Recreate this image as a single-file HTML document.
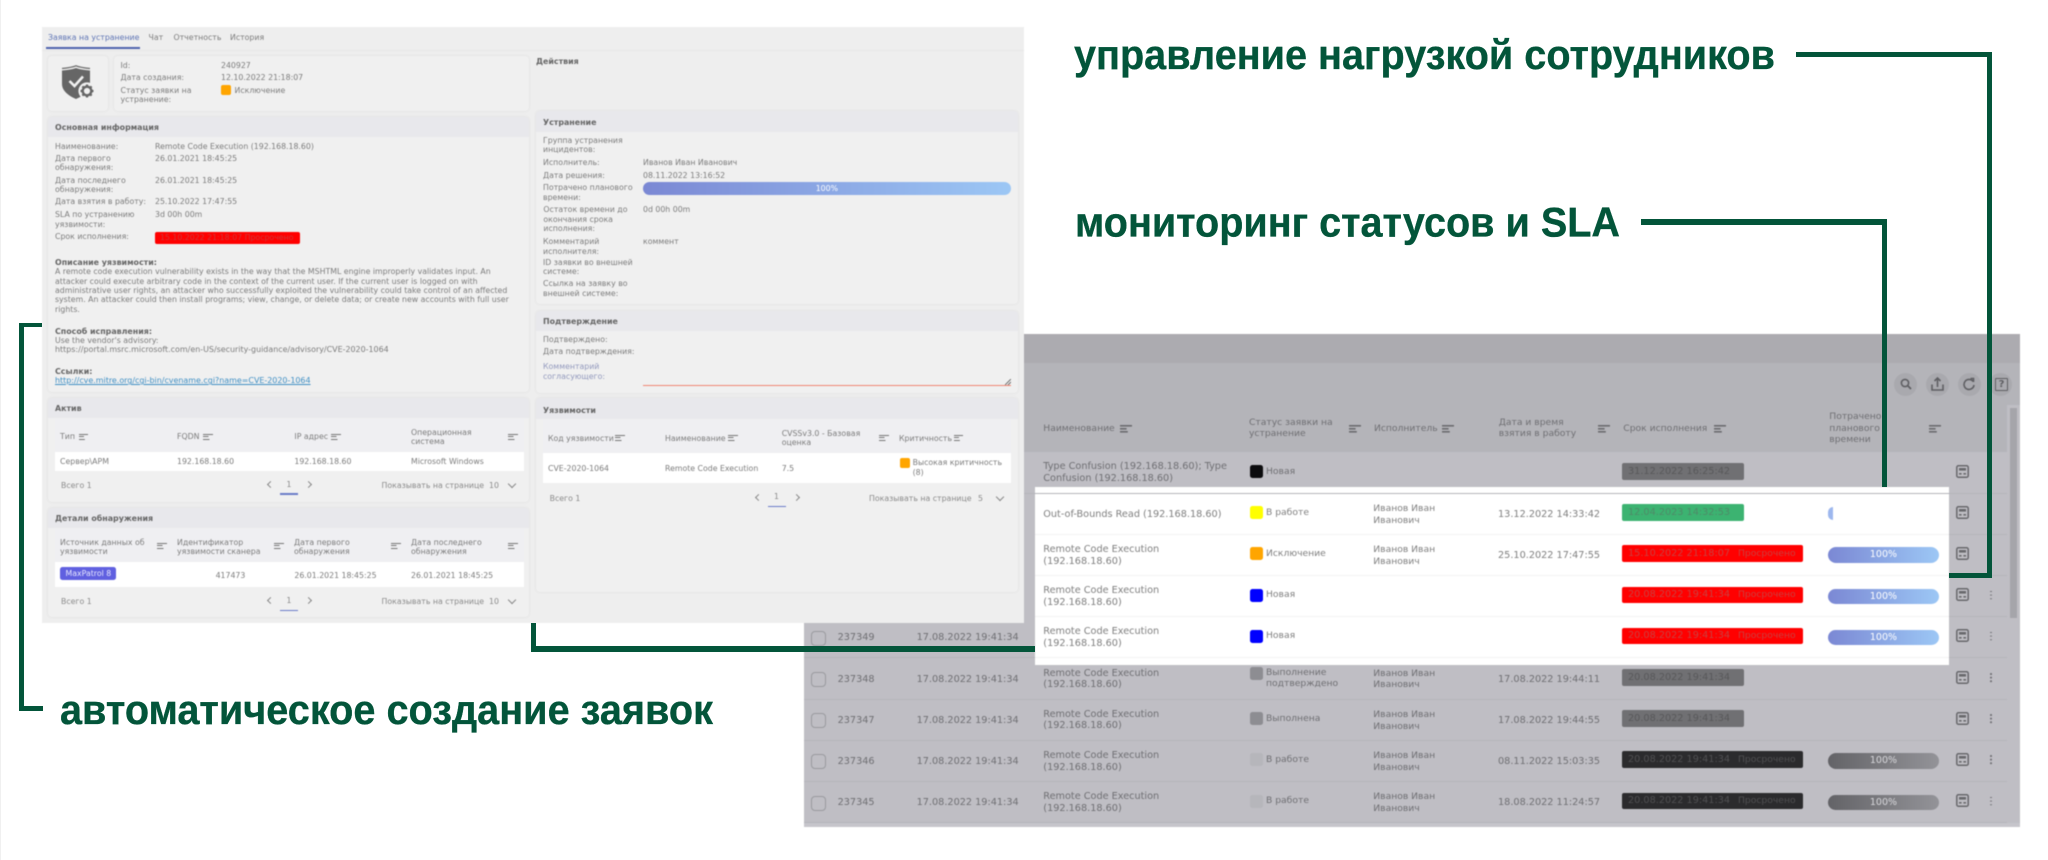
<!DOCTYPE html>
<html lang="ru">
<head>
<meta charset="utf-8">
<title>Заявка на устранение</title>
<style>
html,body{margin:0;padding:0;background:#fff;width:2048px;height:860px;overflow:hidden}
body{position:relative;font-family:"DejaVu Sans","Liberation Sans",sans-serif}
.layer{position:absolute;left:0;top:0;width:2048px;height:860px}
.layer div,.layer span,.layer a,.layer svg{position:absolute}
/* panel */
#panel{filter:blur(.55px);color:#7c7c7c;font-size:7.8px}
.t{white-space:nowrap;line-height:10px;height:10px;margin-top:.8px}
.l{font-size:7.95px}
.h{font-weight:bold;color:#666;font-size:7.9px}
.card{background:#f0f0f0;border-radius:4px;box-shadow:0 0 3px rgba(0,0,0,.07)}
.chd{background:#e8e8ec;border-radius:4px 4px 0 0}
.si{width:9.5px;height:7px;background:linear-gradient(#777,#777) 0 0/100% 1.4px no-repeat,linear-gradient(#777,#777) 0 50%/55% 1.4px no-repeat,linear-gradient(#777,#777) 0 100%/65% 1.4px no-repeat}
.pg{color:#8a8a8a}
.ch{width:5px;height:5px;border-right:1px solid #888;border-bottom:1px solid #888;transform:rotate(45deg)}
.cl{width:4px;height:4px;border-left:1px solid #888;border-bottom:1px solid #888;transform:rotate(45deg)}
.cr{width:4px;height:4px;border-right:1px solid #888;border-top:1px solid #888;transform:rotate(45deg)}
/* table */
#tbl{filter:blur(.45px);color:#6f6f73;font-size:9.7px}
.r{left:0;width:2048px;height:41px}
.t2{white-space:nowrap;line-height:12px;height:12px}
.c{font-size:9.2px}
.r .t2{margin-top:.8px}
.r .box .t2{margin-top:-.3px}
.sq{width:13px;height:13px;border-radius:2.5px;top:13px;left:1249.5px}
.box{left:1622px;top:11px;height:16.5px;border-radius:2px}
.bar{left:1827.7px;top:13px;width:111.6px;height:15.3px;border-radius:8px;background:linear-gradient(90deg,#7b88d4,#9cc7f5);color:#fff;text-align:center;font-size:9.5px;line-height:16px}
.bar2{background:linear-gradient(90deg,#636367,#939398);color:#d8d8dc}
.sep{left:804px;width:1203px;top:40.6px;height:1px;background:#b5b5ba}
.si2{width:11.7px;height:8px;background:linear-gradient(#6a6a6e,#6a6a6e) 0 0/100% 1.6px no-repeat,linear-gradient(#6a6a6e,#6a6a6e) 0 50%/55% 1.6px no-repeat,linear-gradient(#6a6a6e,#6a6a6e) 0 100%/65% 1.6px no-repeat}
.cb{left:810.5px;top:14px;width:13px;height:13px;border:1.5px solid #9a9a9f;border-radius:4px}
.ca{left:1955.7px;top:12.5px;width:13px;height:13px}
.do{left:1990px;top:15px;width:1.6px;height:1.6px;background:#707074;box-shadow:0 3.6px 0 #707074,0 7.2px 0 #707074;border-radius:50%}
.cir{top:372.5px;width:23px;height:23px;border-radius:50%;background:#a9a9ae}
.w{color:#7f7f7f}
.g{background:#03553a;position:absolute;z-index:5}
</style>
</head>
<body>
<svg width="0" height="0" style="position:absolute">
<symbol id="calc" viewBox="0 0 13 13"><rect x=".8" y=".8" width="11.4" height="11.4" rx="1.5" fill="none" stroke="#68686c" stroke-width="1.5"/><rect x="3" y="3" width="7" height="2.6" fill="#68686c"/><rect x="3" y="8" width="2.6" height="1.6" fill="#68686c"/><rect x="7.4" y="8" width="2.6" height="1.6" fill="#68686c"/></symbol>
</svg>
<div style="position:absolute;left:0;top:0;width:1px;height:860px;background:#f0f0f0"></div>

<!-- TABLE -->
<div class="layer" id="tbl">
<div style="left:804px;top:334px;width:1216px;height:492.7px;background:#bfbec4"></div>
<div style="left:804px;top:334px;width:1216px;height:29.3px;background:#acabb0"></div>
<div style="left:804px;top:363.3px;width:1216px;height:88.7px;background:#b4b4b9"></div>
<div style="left:2007px;top:405px;width:13px;height:421.7px;background:#bfbec4"></div>
<div style="left:2010.3px;top:407.7px;width:7px;height:210.6px;background:#a5a5aa"></div>
<div style="left:804px;top:822.7px;width:1216px;height:4px;background:#c6c5cb"></div>

<div class="cir" style="left:1894.2px"></div>
<div class="cir" style="left:1925.8px"></div>
<div class="cir" style="left:1957.5px"></div>
<div class="cir" style="left:1989.2px"></div>
<svg style="left:1899px;top:377px" width="14" height="14" viewBox="0 0 14 14"><circle cx="6" cy="6" r="3.6" fill="none" stroke="#5f5f63" stroke-width="1.6"/><path d="M8.8 8.8L12 12" stroke="#5f5f63" stroke-width="1.8"/></svg>
<svg style="left:1930px;top:376px" width="15" height="16" viewBox="0 0 15 16"><path d="M7.5 11V2M4.5 5L7.5 2L10.5 5M2 8.5V14H13V8.5" fill="none" stroke="#5f5f63" stroke-width="1.6"/></svg>
<svg style="left:1962px;top:377px" width="14" height="14" viewBox="0 0 14 14"><path d="M11 4.4A5 5 0 1 0 12 8M8.5 1.5L11.5 1.5L11.5 5" fill="none" stroke="#5f5f63" stroke-width="1.6"/></svg>
<div style="left:1995px;top:378px;width:11px;height:11px;border:1.6px solid #5f5f63;border-radius:1px;color:#5f5f63;font-size:10px;line-height:11px;text-align:center;font-weight:bold">?</div>

<span class="t2 c" style="left:1043.3px;top:422.5px">Наименование</span><span class="si2" style="left:1120px;top:424.5px"></span>
<span class="t2 c" style="left:1249px;top:416.7px">Статус заявки на</span><span class="t2 c" style="left:1249px;top:428px">устранение</span><span class="si2" style="left:1349px;top:424.5px"></span>
<span class="t2 c" style="left:1374px;top:422.5px">Исполнитель</span><span class="si2" style="left:1442px;top:424.5px"></span>
<span class="t2 c" style="left:1498.7px;top:416.7px">Дата и время</span><span class="t2 c" style="left:1498.7px;top:428px">взятия в работу</span><span class="si2" style="left:1598.3px;top:424.5px"></span>
<span class="t2 c" style="left:1623.3px;top:422.5px">Срок исполнения</span><span class="si2" style="left:1714px;top:424.5px"></span>
<span class="t2 c" style="left:1829.3px;top:411px">Потрачено</span><span class="t2 c" style="left:1829.3px;top:422.5px">планового</span><span class="t2 c" style="left:1829.3px;top:433.7px">времени</span><span class="si2" style="left:1929px;top:424.5px"></span>

<!-- white highlight -->
<div style="left:1035px;top:486.7px;width:914px;height:178.6px;background:#fff"></div>

<!-- r0 -->
<div class="r" style="top:452px">
<span class="sep"></span>
<span class="t2" style="left:1043.3px;top:8.7px">Type Confusion (192.168.18.60); Type</span><span class="t2" style="left:1043.3px;top:20.3px">Confusion (192.168.18.60)</span>
<span class="sq" style="background:#0c0c0e"></span><span class="t2 c" style="left:1266px;top:13px">Новая</span>
<span class="box" style="width:122px;background:#707073;color:#58585a"><span class="t2" style="left:6px;top:3px">31.12.2022 16:25:42</span></span>
<svg class="ca"><use href="#calc"/></svg>
</div>
<!-- r1 -->
<div class="r w" style="top:493.3px">
<span class="sep" style="background:#f3f3f3;width:914px;left:1035px"></span><span class="sep" style="background:#b5b5ba;left:1949px;width:58px"></span>
<span class="t2" style="left:1043.3px;top:14.7px">Out-of-Bounds Read (192.168.18.60)</span>
<span class="sq" style="background:#ffff00"></span><span class="t2 c" style="left:1266px;top:13px">В работе</span>
<span class="t2 c" style="left:1373.3px;top:9px">Иванов Иван</span><span class="t2 c" style="left:1373.3px;top:20.7px">Иванович</span>
<span class="t2" style="left:1498px;top:14.7px">13.12.2022 14:33:42</span>
<span class="box" style="width:122px;background:#3cb371;color:#4f8a68"><span class="t2" style="left:6px;top:3px">12.04.2023 14:32:53</span></span>
<span style="left:1827.7px;top:13.4px;width:5.5px;height:13.4px;background:#9db7ee;border-radius:5px 0 0 5px"></span>
<svg class="ca"><use href="#calc"/></svg>
</div>
<!-- r2 -->
<div class="r w" style="top:534.4px">
<span class="sep" style="background:#f3f3f3;width:914px;left:1035px"></span><span class="sep" style="background:#b5b5ba;left:1949px;width:58px"></span>
<span class="t2" style="left:1043.3px;top:9px">Remote Code Execution</span><span class="t2" style="left:1043.3px;top:20.5px">(192.168.18.60)</span>
<span class="sq" style="background:#ffa500"></span><span class="t2 c" style="left:1266px;top:13px">Исключение</span>
<span class="t2 c" style="left:1373.3px;top:9px">Иванов Иван</span><span class="t2 c" style="left:1373.3px;top:20.7px">Иванович</span>
<span class="t2" style="left:1498px;top:14.7px">25.10.2022 17:47:55</span>
<span class="box" style="width:181.3px;background:#ff0000;color:#c94040"><span class="t2" style="left:6px;top:3px">15.10.2022 21:18:07</span><span class="t2 c" style="left:116px;top:3px">Просрочено</span></span>
<span class="bar">100%</span>
<svg class="ca"><use href="#calc"/></svg>
</div>
<!-- r3 -->
<div class="r w" style="top:575.6px">
<span class="sep" style="background:#f3f3f3;width:914px;left:1035px"></span><span class="sep" style="background:#b5b5ba;left:1949px;width:58px"></span>
<span class="t2" style="left:1043.3px;top:9px">Remote Code Execution</span><span class="t2" style="left:1043.3px;top:20.5px">(192.168.18.60)</span>
<span class="sq" style="background:#0000ff"></span><span class="t2 c" style="left:1266px;top:13px">Новая</span>
<span class="box" style="width:181.3px;background:#ff0000;color:#c94040"><span class="t2" style="left:6px;top:3px">20.08.2022 19:41:34</span><span class="t2 c" style="left:116px;top:3px">Просрочено</span></span>
<span class="bar">100%</span>
<svg class="ca"><use href="#calc"/></svg><span class="do"></span>
</div>
<!-- r4 -->
<div class="r w" style="top:616.7px">
<span class="sep" style="background:#f3f3f3;width:914px;left:1035px"></span><span class="sep" style="background:#b5b5ba;left:804px;width:231px"></span><span class="sep" style="background:#b5b5ba;left:1949px;width:58px"></span>
<span class="cb"></span>
<span class="t2" style="left:837.6px;top:15px;color:#6f6f73">237349</span><span class="t2" style="left:916.6px;top:15px;color:#6f6f73">17.08.2022 19:41:34</span>
<span class="t2" style="left:1043.3px;top:9px">Remote Code Execution</span><span class="t2" style="left:1043.3px;top:20.5px">(192.168.18.60)</span>
<span class="sq" style="background:#0000ff"></span><span class="t2 c" style="left:1266px;top:13px">Новая</span>
<span class="box" style="width:181.3px;background:#ff0000;color:#c94040"><span class="t2" style="left:6px;top:3px">20.08.2022 19:41:34</span><span class="t2 c" style="left:116px;top:3px">Просрочено</span></span>
<span class="bar">100%</span>
<svg class="ca"><use href="#calc"/></svg><span class="do"></span>
</div>
<!-- r5 -->
<div class="r" style="top:658px">
<span class="sep"></span>
<span class="cb"></span>
<span class="t2" style="left:837.6px;top:15px">237348</span><span class="t2" style="left:916.6px;top:15px">17.08.2022 19:41:34</span>
<span class="t2" style="left:1043.3px;top:9px">Remote Code Execution</span><span class="t2" style="left:1043.3px;top:20.5px">(192.168.18.60)</span>
<span class="sq" style="background:#8d8d92;top:8.5px"></span><span class="t2 c" style="left:1266px;top:8px">Выполнение</span><span class="t2 c" style="left:1266px;top:19.5px">подтверждено</span>
<span class="t2 c" style="left:1373.3px;top:9px">Иванов Иван</span><span class="t2 c" style="left:1373.3px;top:20.7px">Иванович</span>
<span class="t2" style="left:1498px;top:15px">17.08.2022 19:44:11</span>
<span class="box" style="width:122px;background:#707073;color:#58585a"><span class="t2" style="left:6px;top:3px">20.08.2022 19:41:34</span></span>
<svg class="ca"><use href="#calc"/></svg><span class="do"></span>
</div>
<!-- r6 -->
<div class="r" style="top:699.2px">
<span class="sep"></span>
<span class="cb"></span>
<span class="t2" style="left:837.6px;top:15px">237347</span><span class="t2" style="left:916.6px;top:15px">17.08.2022 19:41:34</span>
<span class="t2" style="left:1043.3px;top:9px">Remote Code Execution</span><span class="t2" style="left:1043.3px;top:20.5px">(192.168.18.60)</span>
<span class="sq" style="background:#8d8d92"></span><span class="t2 c" style="left:1266px;top:13px">Выполнена</span>
<span class="t2 c" style="left:1373.3px;top:9px">Иванов Иван</span><span class="t2 c" style="left:1373.3px;top:20.7px">Иванович</span>
<span class="t2" style="left:1498px;top:15px">17.08.2022 19:44:55</span>
<span class="box" style="width:122px;background:#707073;color:#58585a"><span class="t2" style="left:6px;top:3px">20.08.2022 19:41:34</span></span>
<svg class="ca"><use href="#calc"/></svg><span class="do"></span>
</div>
<!-- r7 -->
<div class="r" style="top:740.3px">
<span class="sep"></span>
<span class="cb"></span>
<span class="t2" style="left:837.6px;top:15px">237346</span><span class="t2" style="left:916.6px;top:15px">17.08.2022 19:41:34</span>
<span class="t2" style="left:1043.3px;top:9px">Remote Code Execution</span><span class="t2" style="left:1043.3px;top:20.5px">(192.168.18.60)</span>
<span class="sq" style="background:#b6b6bb"></span><span class="t2 c" style="left:1266px;top:13px">В работе</span>
<span class="t2 c" style="left:1373.3px;top:9px">Иванов Иван</span><span class="t2 c" style="left:1373.3px;top:20.7px">Иванович</span>
<span class="t2" style="left:1498px;top:15px">08.11.2022 15:03:35</span>
<span class="box" style="width:181.3px;background:#2b2b2d;color:#505052"><span class="t2" style="left:6px;top:3px">20.08.2022 19:41:34</span><span class="t2 c" style="left:116px;top:3px">Просрочено</span></span>
<span class="bar bar2">100%</span>
<svg class="ca"><use href="#calc"/></svg><span class="do"></span>
</div>
<!-- r8 -->
<div class="r" style="top:781.5px">
<span class="sep"></span>
<span class="cb"></span>
<span class="t2" style="left:837.6px;top:15px">237345</span><span class="t2" style="left:916.6px;top:15px">17.08.2022 19:41:34</span>
<span class="t2" style="left:1043.3px;top:9px">Remote Code Execution</span><span class="t2" style="left:1043.3px;top:20.5px">(192.168.18.60)</span>
<span class="sq" style="background:#b6b6bb"></span><span class="t2 c" style="left:1266px;top:13px">В работе</span>
<span class="t2 c" style="left:1373.3px;top:9px">Иванов Иван</span><span class="t2 c" style="left:1373.3px;top:20.7px">Иванович</span>
<span class="t2" style="left:1498px;top:15px">18.08.2022 11:24:57</span>
<span class="box" style="width:181.3px;background:#2b2b2d;color:#505052"><span class="t2" style="left:6px;top:3px">20.08.2022 19:41:34</span><span class="t2 c" style="left:116px;top:3px">Просрочено</span></span>
<span class="bar bar2">100%</span>
<svg class="ca"><use href="#calc"/></svg><span class="do"></span>
</div>
</div>

<!-- PANEL -->
<div class="layer" id="panel">
<div style="left:42px;top:27px;width:982px;height:595.5px;background:#eeeeee"></div>
<div style="left:42px;top:50px;width:982px;height:1px;background:#e8e8e8"></div>
<span class="t" style="left:48px;top:32.7px;color:#5f75b5">Заявка на устранение</span>
<span class="t" style="left:148.5px;top:32.7px">Чат</span>
<span class="t" style="left:173.5px;top:32.7px">Отчетность</span>
<span class="t" style="left:230px;top:32.7px">История</span>
<div style="left:46px;top:47px;width:94px;height:2.4px;background:#4f62ae"></div>

<div class="card" style="left:48px;top:56px;width:60px;height:55px"></div>
<svg style="left:60px;top:65px" width="36" height="36" viewBox="0 0 36 36">
<path d="M2 3.5C7 3 12 2.5 16 .8C20 2.5 25 3 30 3.5" fill="none" stroke="#6a6a6a" stroke-width="1.2"/>
<path d="M2 5.5C7 5 12 4.5 16 3C20 4.5 25 5 30 5.5V19C30 26 23 31 16 34C9 31 2 26 2 19Z" fill="#666"/>
<path d="M9.5 16L14.5 21L23 11.5" fill="none" stroke="#f0f0f0" stroke-width="2.6"/>
<circle cx="27" cy="26" r="8.6" fill="#f0f0f0"/>
<circle cx="27" cy="26" r="4.3" fill="none" stroke="#666" stroke-width="2.4"/>
<path d="M27 19.5V22M27 30V32.5M20.5 26H23M31 26H33.5M22.4 21.4L24 23M30 29L31.6 30.6M22.4 30.6L24 29M30 23L31.6 21.4" stroke="#666" stroke-width="2.2"/>
</svg>
<div class="card" style="left:114px;top:56px;width:415px;height:55px"></div>
<span class="t" style="left:120.5px;top:60px">Id:</span><span class="t" style="left:221px;top:60px">240927</span>
<span class="t" style="left:120.5px;top:72.7px">Дата создания:</span><span class="t" style="left:221px;top:72.7px">12.10.2022 21:18:07</span>
<span class="t" style="left:120.5px;top:85.3px">Статус заявки на</span><span class="t" style="left:120.5px;top:94.7px">устранение:</span>
<div style="left:221px;top:85.3px;width:10px;height:10px;border-radius:2px;background:#ffa500"></div>
<span class="t" style="left:234.5px;top:85.3px">Исключение</span>

<!-- Основная информация -->
<div class="card" style="left:48px;top:116.7px;width:481px;height:275px"></div>
<div class="chd" style="left:48px;top:116.7px;width:481px;height:20px"></div>
<span class="t h" style="left:55px;top:122.3px">Основная информация</span>
<span class="t" style="left:55px;top:141px">Наименование:</span><span class="t" style="left:155px;top:141px">Remote Code Execution (192.168.18.60)</span>
<span class="t" style="left:55px;top:153.3px">Дата первого</span><span class="t" style="left:55px;top:162.7px">обнаружения:</span><span class="t" style="left:155px;top:153.3px">26.01.2021 18:45:25</span>
<span class="t" style="left:55px;top:175px">Дата последнего</span><span class="t" style="left:55px;top:184.3px">обнаружения:</span><span class="t" style="left:155px;top:175px">26.01.2021 18:45:25</span>
<span class="t" style="left:55px;top:196.7px">Дата взятия в работу:</span><span class="t" style="left:155px;top:196.7px">25.10.2022 17:47:55</span>
<span class="t" style="left:55px;top:209.7px">SLA по устранению</span><span class="t" style="left:55px;top:219px">уязвимости:</span><span class="t" style="left:155px;top:209.7px">3d 00h 00m</span>
<span class="t" style="left:55px;top:231.7px">Срок исполнения:</span>
<div style="left:155px;top:231.7px;width:145px;height:12.6px;background:#ff0000;border-radius:2px"></div>
<span class="t" style="left:160px;top:232.5px;color:#c93a3a">15.10.2022 21:18:07 Просрочено</span>
<span class="t h" style="left:55px;top:257.3px">Описание уязвимости:</span>
<span class="t" style="left:55px;top:266.7px">A remote code execution vulnerability exists in the way that the MSHTML engine improperly validates input. An</span>
<span class="t" style="left:55px;top:276px">attacker could execute arbitrary code in the context of the current user. If the current user is logged on with</span>
<span class="t" style="left:55px;top:285.3px">administrative user rights, an attacker who successfully exploited the vulnerability could take control of an affected</span>
<span class="t" style="left:55px;top:294.7px">system. An attacker could then install programs; view, change, or delete data; or create new accounts with full user</span>
<span class="t" style="left:55px;top:304px">rights.</span>
<span class="t h" style="left:55px;top:326px">Способ исправления:</span>
<span class="t" style="left:55px;top:335px">Use the vendor's advisory:</span>
<span class="t l" style="left:55px;top:344.3px">https://portal.msrc.microsoft.com/en-US/security-guidance/advisory/CVE-2020-1064</span>
<span class="t h" style="left:55px;top:366px">Ссылки:</span>
<span class="t l" style="left:55px;top:375.3px;color:#3f8fc4;text-decoration:underline">http://cve.mitre.org/cgi-bin/cvename.cgi?name=CVE-2020-1064</span>

<!-- Актив -->
<div class="card" style="left:48px;top:398.3px;width:481px;height:103.4px"></div>
<div class="chd" style="left:48px;top:398.3px;width:481px;height:19.4px"></div>
<span class="t h" style="left:55px;top:403.3px">Актив</span>
<div style="left:55px;top:417.7px;width:469px;height:34px;background:#efeff2"></div>
<div style="left:55px;top:451.7px;width:469px;height:19.3px;background:#fff"></div>
<span class="t" style="left:60px;top:431.7px">Тип</span><span class="si" style="left:78.5px;top:433.5px"></span>
<span class="t" style="left:177px;top:431.7px">FQDN</span><span class="si" style="left:203px;top:433.5px"></span>
<span class="t" style="left:294.4px;top:431.7px">IP адрес</span><span class="si" style="left:331px;top:433.5px"></span>
<span class="t" style="left:411px;top:427px">Операционная</span><span class="t" style="left:411px;top:436.7px">система</span><span class="si" style="left:508px;top:433.5px"></span>
<span class="t" style="left:60px;top:456.3px">Сервер\АРМ</span><span class="t" style="left:177px;top:456.3px">192.168.18.60</span><span class="t" style="left:294.4px;top:456.3px">192.168.18.60</span><span class="t" style="left:411px;top:456.3px">Microsoft Windows</span>
<span class="t pg" style="left:61px;top:480.3px">Всего 1</span>
<span class="cl" style="left:267.5px;top:482px"></span><span class="t pg" style="left:286.5px;top:479px">1</span><span class="cr" style="left:306px;top:482px"></span>
<div style="left:280px;top:493px;width:18px;height:1.5px;background:#6a7bc8"></div>
<span class="t pg" style="left:381.5px;top:480.3px">Показывать на странице</span><span class="t pg" style="left:489px;top:480px">10</span>
<span class="ch" style="left:509px;top:481px"></span>

<!-- Детали -->
<div class="card" style="left:48px;top:508.3px;width:481px;height:109px"></div>
<div class="chd" style="left:48px;top:508.3px;width:481px;height:19.7px"></div>
<span class="t h" style="left:55px;top:513.3px">Детали обнаружения</span>
<div style="left:55px;top:528px;width:469px;height:33.7px;background:#efeff2"></div>
<div style="left:55px;top:561.7px;width:469px;height:25.3px;background:#fff"></div>
<span class="t" style="left:60px;top:537.3px">Источник данных об</span><span class="t" style="left:60px;top:546.7px">уязвимости</span><span class="si" style="left:157px;top:542.5px"></span>
<span class="t" style="left:177px;top:537.3px">Идентификатор</span><span class="t" style="left:177px;top:546.7px">уязвимости сканера</span><span class="si" style="left:274px;top:542.5px"></span>
<span class="t" style="left:294px;top:537.3px">Дата первого</span><span class="t" style="left:294px;top:546.7px">обнаружения</span><span class="si" style="left:391px;top:542.5px"></span>
<span class="t" style="left:411px;top:537.3px">Дата последнего</span><span class="t" style="left:411px;top:546.7px">обнаружения</span><span class="si" style="left:508px;top:542.5px"></span>
<div style="left:60px;top:566.7px;width:56.4px;height:13.6px;background:#6060e0;border-radius:2.5px"></div>
<span class="t" style="left:65.5px;top:568px;color:#e8e8ff">MaxPatrol 8</span>
<span class="t" style="left:215.6px;top:570px">417473</span><span class="t" style="left:294.4px;top:570px">26.01.2021 18:45:25</span><span class="t" style="left:411px;top:570px">26.01.2021 18:45:25</span>
<span class="t pg" style="left:61px;top:596.7px">Всего 1</span>
<span class="cl" style="left:267.5px;top:598px"></span><span class="t pg" style="left:286.5px;top:595px">1</span><span class="cr" style="left:306px;top:598px"></span>
<div style="left:280px;top:609.5px;width:18px;height:1.5px;background:#6a7bc8"></div>
<span class="t pg" style="left:381.5px;top:596.7px">Показывать на странице</span><span class="t pg" style="left:489px;top:596px">10</span>
<span class="ch" style="left:509px;top:597px"></span>

<!-- Right column -->
<span class="t h" style="left:536px;top:56.3px">Действия</span>
<div class="card" style="left:536px;top:111px;width:481.6px;height:193px"></div>
<div class="chd" style="left:536px;top:111px;width:481.6px;height:20.7px"></div>
<span class="t h" style="left:543px;top:117.3px">Устранение</span>
<span class="t" style="left:543px;top:135.3px">Группа устранения</span><span class="t" style="left:543px;top:144.7px">инцидентов:</span>
<span class="t" style="left:543px;top:157px">Исполнитель:</span><span class="t" style="left:643px;top:157px">Иванов Иван Иванович</span>
<span class="t" style="left:543px;top:170px">Дата решения:</span><span class="t" style="left:643px;top:170px">08.11.2022 13:16:52</span>
<span class="t" style="left:543px;top:182.7px">Потрачено планового</span><span class="t" style="left:543px;top:192px">времени:</span>
<div style="left:643px;top:182.3px;width:367.7px;height:13px;border-radius:6.5px;background:linear-gradient(90deg,#7b88d4,#9cc7f5);color:#fff;text-align:center;line-height:13.5px">100%</div>
<span class="t" style="left:543.4px;top:204.7px">Остаток времени до</span><span class="t" style="left:543.4px;top:214px">окончания срока</span><span class="t" style="left:543.4px;top:223.3px">исполнения:</span><span class="t" style="left:643px;top:204px">0d 00h 00m</span>
<span class="t" style="left:543px;top:236.7px">Комментарий</span><span class="t" style="left:543px;top:246px">исполнителя:</span><span class="t" style="left:643px;top:236.7px">коммент</span>
<span class="t" style="left:543px;top:257px">ID заявки во внешней</span><span class="t" style="left:543px;top:266.3px">системе:</span>
<span class="t" style="left:543px;top:278.7px">Ссылка на заявку во</span><span class="t" style="left:543px;top:288px">внешней системе:</span>

<div class="card" style="left:536px;top:310.7px;width:481.6px;height:82px"></div>
<div class="chd" style="left:536px;top:310.7px;width:481.6px;height:20px"></div>
<span class="t h" style="left:543px;top:316.3px">Подтверждение</span>
<span class="t" style="left:543px;top:334.3px">Подтверждено:</span>
<span class="t" style="left:543px;top:346.3px">Дата подтверждения:</span>
<span class="t" style="left:543px;top:361.7px;color:#9299bd">Комментарий</span><span class="t" style="left:543px;top:371.3px;color:#9299bd">согласующего:</span>
<div style="left:643px;top:384.6px;width:367.7px;height:1.4px;background:#f08573"></div>
<svg style="left:1004.5px;top:378.5px" width="6" height="6" viewBox="0 0 6 6"><path d="M0 6L6 0M3 6L6 3" stroke="#666" stroke-width=".9"/></svg>

<div class="card" style="left:536px;top:398.3px;width:481.6px;height:193.7px"></div>
<div class="chd" style="left:536px;top:398.3px;width:481.6px;height:20.7px"></div>
<span class="t h" style="left:543px;top:405px">Уязвимости</span>
<div style="left:543px;top:419px;width:467.7px;height:34px;background:#efeff2"></div>
<div style="left:543px;top:453px;width:467.7px;height:30.3px;background:#fff"></div>
<span class="t" style="left:548px;top:433px">Код уязвимости</span><span class="si" style="left:615.4px;top:434.5px"></span>
<span class="t" style="left:665px;top:433px">Наименование</span><span class="si" style="left:728px;top:434.5px"></span>
<span class="t" style="left:781.7px;top:428px">CVSSv3.0 - Базовая</span><span class="t" style="left:781.7px;top:437.3px">оценка</span><span class="si" style="left:879px;top:434.5px"></span>
<span class="t" style="left:899px;top:433px">Критичность</span><span class="si" style="left:953.5px;top:434.5px"></span>
<span class="t" style="left:548px;top:463px">CVE-2020-1064</span><span class="t" style="left:665px;top:463px">Remote Code Execution</span><span class="t" style="left:781.7px;top:463px">7.5</span>
<div style="left:899.5px;top:457.7px;width:10px;height:10px;border-radius:2px;background:#ffa500"></div>
<span class="t" style="left:912.6px;top:457.7px">Высокая критичность</span><span class="t" style="left:912.6px;top:467px">(8)</span>
<span class="t pg" style="left:549.6px;top:493.3px">Всего 1</span>
<span class="cl" style="left:755.5px;top:495px"></span><span class="t pg" style="left:774px;top:491.7px">1</span><span class="cr" style="left:794px;top:495px"></span>
<div style="left:768px;top:505.6px;width:17.5px;height:1.5px;background:#6a7bc8"></div>
<span class="t pg" style="left:869px;top:493.3px">Показывать на странице</span><span class="t pg" style="left:978px;top:493px">5</span>
<span class="ch" style="left:997px;top:494px"></span>
</div>

<!-- GREEN LINES -->
<div class="g" style="left:19px;top:322.7px;width:23px;height:4.8px"></div>
<div class="g" style="left:19px;top:322.7px;width:5px;height:388px"></div>
<div class="g" style="left:19px;top:706px;width:24px;height:4.7px"></div>
<div class="g" style="left:530.7px;top:622.5px;width:5.3px;height:29.3px"></div>
<div class="g" style="left:530.7px;top:646.4px;width:504.3px;height:5.4px"></div>
<div class="g" style="left:1796px;top:51.7px;width:195.5px;height:5.6px"></div>
<div class="g" style="left:1986.5px;top:51.7px;width:5px;height:526.6px"></div>
<div class="g" style="left:1949px;top:572.7px;width:42.5px;height:5.6px"></div>
<div class="g" style="left:1641px;top:219px;width:246.3px;height:6px"></div>
<div class="g" style="left:1882.3px;top:219px;width:5px;height:267.7px"></div>

<svg class="headings" style="position:absolute;left:0;top:0;z-index:6" width="2048" height="860" font-family="'Liberation Sans',sans-serif" font-weight="bold" font-size="41.5" fill="#03553a" stroke="#03553a" stroke-width=".35">
<text x="1074" y="69" textLength="701" lengthAdjust="spacingAndGlyphs">управление нагрузкой сотрудников</text>
<text x="1075" y="236.7" textLength="545" lengthAdjust="spacingAndGlyphs">мониторинг статусов и SLA</text>
<text x="60" y="724" textLength="653" lengthAdjust="spacingAndGlyphs">автоматическое создание заявок</text>
</svg>
</body>
</html>
